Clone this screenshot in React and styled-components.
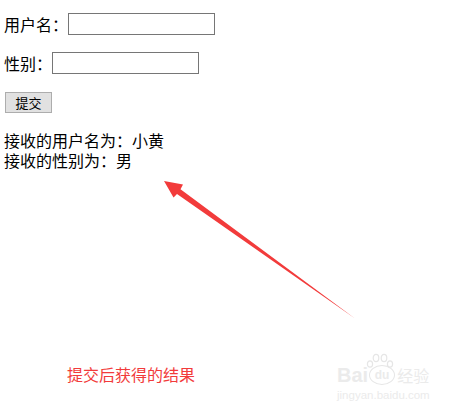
import React from "react";
import styled, { createGlobalStyle } from "styled-components";

const Global = createGlobalStyle`
  html, body { margin: 0; padding: 0; background: #fff; }
  body { font-family: "Noto Sans CJK SC", "Microsoft YaHei", sans-serif; }
`;

const Page = styled.div`
  position: relative;
  width: 454px;
  height: 410px;
  overflow: hidden;
  background: #fff;
  padding: 13px 0 0 4px;
  box-sizing: border-box;
  color: #000;
  font-size: 16px;
`;

const Row = styled.div`
  display: flex;
  align-items: center;
  height: 22px;
  margin-bottom: ${(p) => p.$gap}px;
`;

const Label = styled.span`
  font-size: 16px;
  line-height: 22px;
  white-space: nowrap;
`;

const TextInput = styled.input`
  box-sizing: border-box;
  width: 147px;
  height: 22px;
  margin: 0;
  padding: 1px 2px;
  border: 1px solid #767676;
  background: #fff;
  outline: none;
`;

const Button = styled.button`
  box-sizing: border-box;
  width: 47px;
  height: 21px;
  margin: 0 0 0 1px;
  padding: 0;
  border: 1px solid #adadad;
  background: #e1e1e1;
  font-family: "Noto Sans CJK SC", sans-serif;
  font-size: 13px;
  line-height: 19px;
  color: #000;
`;

const Result = styled.div`
  margin-top: 17px;
  font-size: 16px;
`;

const ResultLine = styled.div`
  line-height: 20px;
  height: 20px;
`;

const Arrow = styled.svg`
  position: absolute;
  left: 0;
  top: 0;
  pointer-events: none;
`;

const Caption = styled.div`
  position: absolute;
  left: 67px;
  top: 363px;
  font-size: 16px;
  line-height: 22px;
  color: #f23b3b;
`;

const Watermark = styled.div`
  position: absolute;
  left: 337px;
  top: 353px;
  display: flex;
  flex-direction: column;
  color: #ebebeb;
  font-family: "Liberation Sans", Arial, sans-serif;
`;

const MarkTop = styled.div`
  position: relative;
  display: flex;
  align-items: flex-end;
  font-size: 20px;
  font-weight: bold;
  line-height: 20px;
  height: 32px;
`;

const Paw = styled.svg`
  position: absolute;
  left: 29px;
  top: 0;
`;

const DuCircle = styled.span`
  display: inline-flex;
  align-items: center;
  justify-content: center;
  width: 24px;
  height: 18px;
  border: 1.5px solid #e6e6e6;
  border-radius: 50%;
  font-size: 12px;
  margin: 0 2px 0 1px;
`;

const MarkCn = styled.span`
  font-family: "Noto Sans CJK SC", sans-serif;
  font-size: 16px;
  font-weight: normal;
`;

const MarkUrl = styled.div`
  font-size: 11.5px;
  line-height: 14px;
  margin-top: 3px;
`;

export default function App() {
  return (
    <>
      <Global />
      <Page>
        <Row $gap={17}>
          <Label>用户名：</Label>
          <TextInput type="text" />
        </Row>
        <Row $gap={17}>
          <Label>性别：</Label>
          <TextInput type="text" />
        </Row>
        <Row $gap={0}>
          <Button>提交</Button>
        </Row>
        <Result>
          <ResultLine>接收的用户名为：小黄</ResultLine>
          <ResultLine>接收的性别为：男</ResultLine>
        </Result>
        <Arrow width="454" height="410" viewBox="0 0 454 410">
          <polygon
            points="164,181 183,184.5 180.5,189.3 355,318.5 177,194 173.5,197.5"
            fill="#f23b3b"
          />
        </Arrow>
        <Caption>提交后获得的结果</Caption>
        <Watermark>
          <MarkTop>
            <Paw width="28" height="16" viewBox="0 0 28 16">
              <g fill="none" stroke="#e6e6e6" strokeWidth="1.2">
                <ellipse cx="4" cy="11" rx="2.6" ry="3.2" />
                <ellipse cx="10" cy="5" rx="2.8" ry="3.6" />
                <ellipse cx="18" cy="5" rx="2.8" ry="3.6" />
                <ellipse cx="24" cy="11" rx="2.6" ry="3.2" />
              </g>
            </Paw>
            Bai
            <DuCircle>du</DuCircle>
            <MarkCn>经验</MarkCn>
          </MarkTop>
          <MarkUrl>jingyan.baidu.com</MarkUrl>
        </Watermark>
      </Page>
    </>
  );
}
